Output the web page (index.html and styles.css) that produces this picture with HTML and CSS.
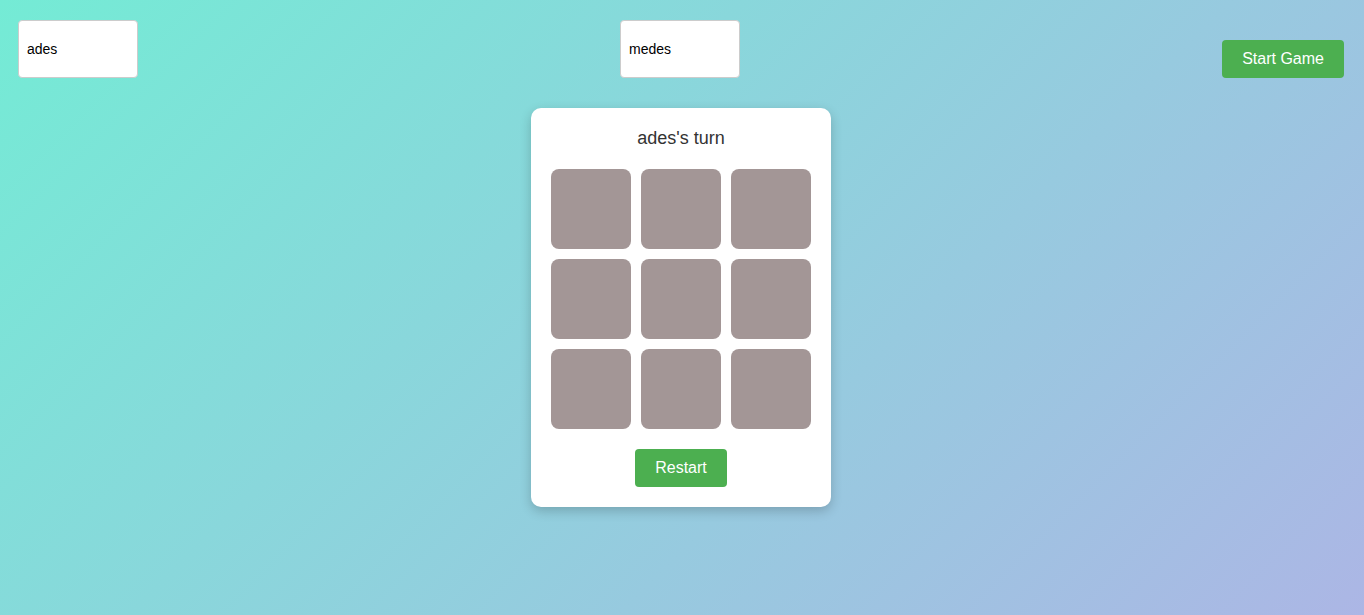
FILE: index.html
```html
<!DOCTYPE html>
<html>
<head>
<meta charset="utf-8">
<link rel="stylesheet" href="styles.css">
</head>
<body>
<div class="topbar">
  <input class="name-input" type="text" value="ades">
  <input class="name-input" type="text" value="medes">
  <button class="btn">Start Game</button>
</div>
<div class="card">
  <div class="status">ades's turn</div>
  <div class="board">
    <div class="cell"></div><div class="cell"></div><div class="cell"></div>
    <div class="cell"></div><div class="cell"></div><div class="cell"></div>
    <div class="cell"></div><div class="cell"></div><div class="cell"></div>
  </div>
  <button class="btn">Restart</button>
</div>
</body>
</html>
```
FILE: styles.css
```css
html, body {
  margin: 0;
  height: 100%;
}
body {
  font-family: "Liberation Sans", Arial, sans-serif;
  background: linear-gradient(135deg, #74ebd5, #acb6e5);
  padding: 0 20px 0 18px;
  box-sizing: border-box;
  overflow: hidden;
}
.topbar {
  display: flex;
  justify-content: space-between;
  align-items: flex-end;
  padding-top: 20px;
}
.name-input {
  width: 120px;
  height: 58px;
  box-sizing: border-box;
  border: 1px solid #ccc;
  border-radius: 4px;
  padding: 0 8px;
  font-family: "Liberation Sans", Arial, sans-serif;
  font-size: 14px;
  color: #000;
  background: #fff;
  outline: none;
}
.btn {
  background: #4caf50;
  color: #fff;
  border: none;
  border-radius: 4px;
  height: 38px;
  padding: 0 20px;
  font-family: "Liberation Sans", Arial, sans-serif;
  font-size: 16px;
  cursor: pointer;
}
.card {
  width: 300px;
  box-sizing: border-box;
  margin: 30px auto 0;
  background: #fff;
  border-radius: 10px;
  padding: 20px;
  box-shadow: 0 4px 12px rgba(0, 0, 0, 0.2);
  display: flex;
  flex-direction: column;
  align-items: center;
}
.status {
  font-size: 18px;
  line-height: 21px;
  color: #333;
  margin-bottom: 20px;
}
.board {
  display: grid;
  grid-template-columns: repeat(3, 80px);
  grid-auto-rows: 80px;
  gap: 10px;
  margin-bottom: 20px;
}
.cell {
  background: #a39696;
  border-radius: 8px;
}
```
